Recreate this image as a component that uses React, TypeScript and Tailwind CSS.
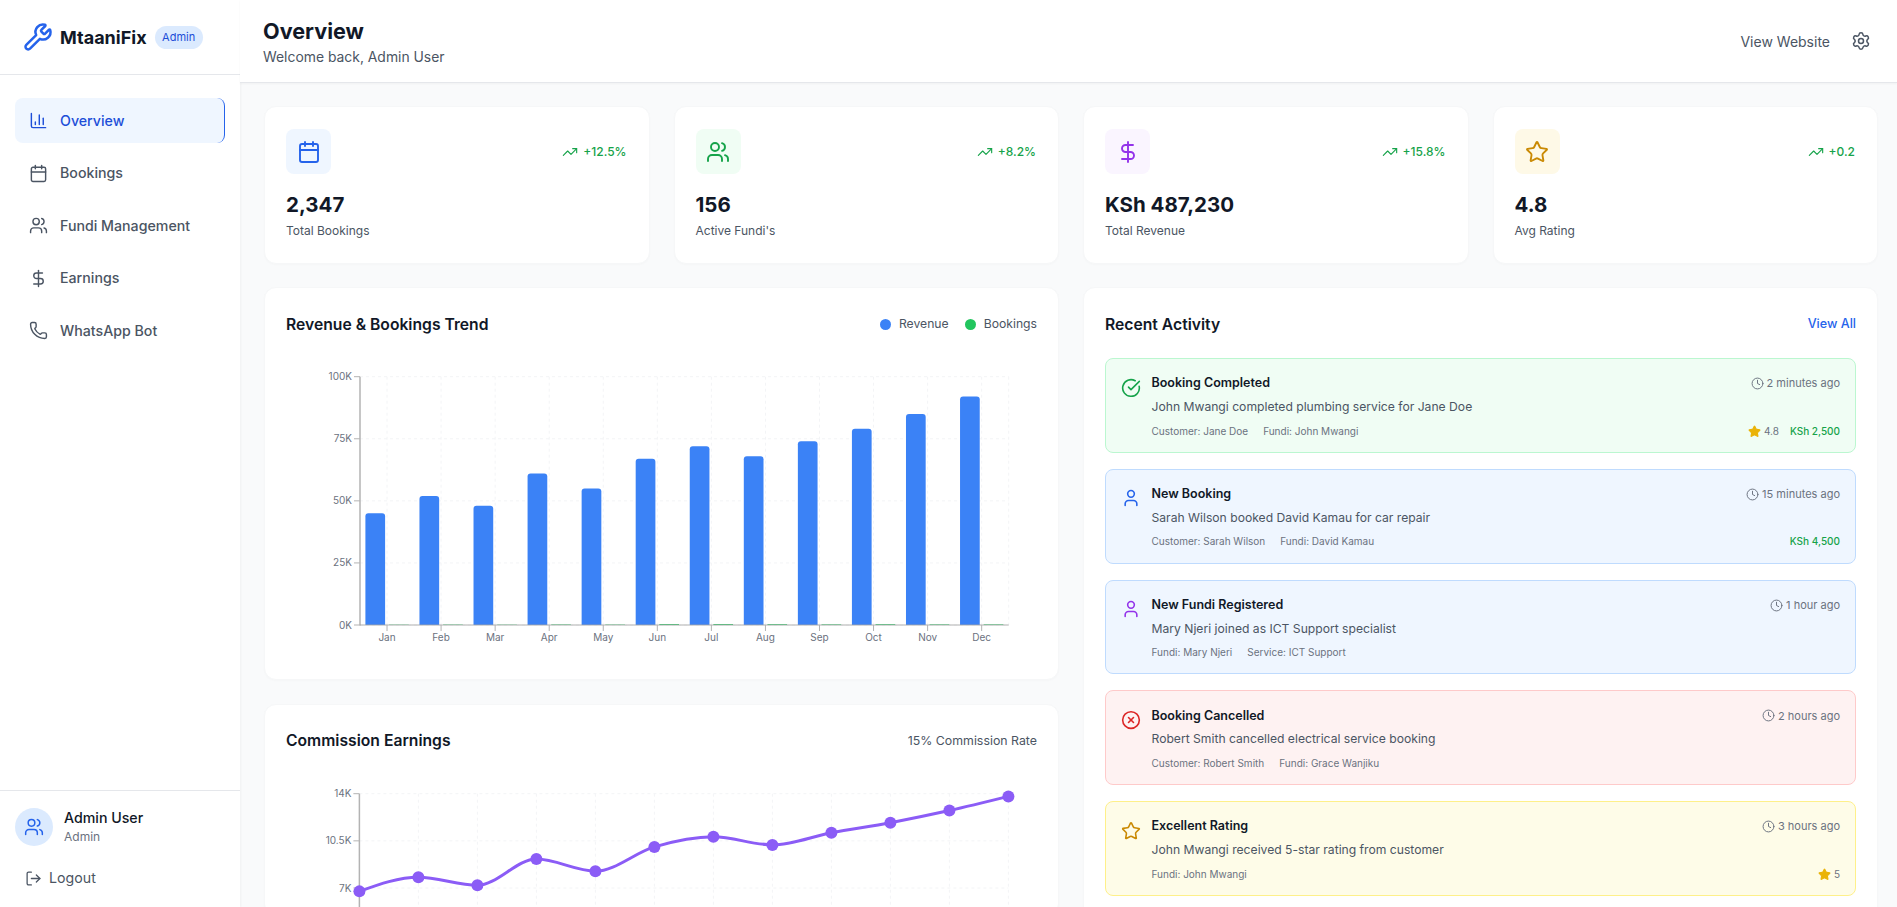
import React from "react";
import {
  Wrench, ChartColumn, Calendar, Users, DollarSign, Phone, LogOut, Settings, TrendingUp,
  Star, CircleCheckBig, User, CircleX, Clock,
} from "lucide-react";

const months = ["Jan", "Feb", "Mar", "Apr", "May", "Jun", "Jul", "Aug", "Sep", "Oct", "Nov", "Dec"];
const revenue = [45, 52, 48, 61, 55, 67, 72, 68, 74, 79, 85, 92];
const commission = [6750, 7800, 7200, 9150, 8250, 10050, 10800, 10200, 11100, 11850, 12750, 13800];
const bookingHeights = [0.3, 0.4, 0.3, 0.5, 0.4, 0.9, 0.9, 0.8, 0.6, 0.8, 0.6, 0.6];

function BarChart() {
  const L = 74, R = 722.7, T = 18.7, B = 267;
  const step = (R - L) / 12;
  const y = (v: number) => B - (v / 100) * (B - T);
  return (
    <svg className="block w-full h-[300px]" viewBox="0 0 751 300" fontSize="10" fontFamily="Inter, sans-serif">
      {[0, 25, 50, 75, 100].map((v) => (
        <line key={v} x1={L} x2={R} y1={y(v)} y2={y(v)} stroke="#f3f4f6" strokeDasharray="3 3" />
      ))}
      {months.map((m, i) => (
        <line key={m} x1={L + step * (i + 0.5)} x2={L + step * (i + 0.5)} y1={T} y2={B} stroke="#f3f4f6" strokeDasharray="3 3" />
      ))}
      <line x1={R} x2={R} y1={T} y2={B} stroke="#f3f4f6" strokeDasharray="3 3" />
      {revenue.map((v, i) => {
        const x = L + step * i + 5.4;
        const top = y(v);
        return (
          <g key={i}>
            <path d={`M${x} ${B}V${top + 3}Q${x} ${top} ${x + 3} ${top}H${x + 16.7}Q${x + 19.7} ${top} ${x + 19.7} ${top + 3}V${B}Z`} fill="#3b82f6" />
            <rect x={x + 23.6} y={B - bookingHeights[i]} width={19.7} height={bookingHeights[i]} fill="#22c55e" />
          </g>
        );
      })}
      <line x1={L} x2={L} y1={T} y2={B + 0.5} stroke="#b3b3b3" strokeWidth="1.5" />
      <line x1={L} x2={R} y1={B} y2={B} stroke="#a3a3a3" strokeWidth="1.2" opacity="0.85" />
      {[0, 25, 50, 75, 100].map((v) => (
        <g key={v}>
          <line x1={L - 6} x2={L} y1={y(v)} y2={y(v)} stroke="#b3b3b3" />
          <text x={L - 8} y={y(v) + 3.5} textAnchor="end" fill="#6b7280">{v}K</text>
        </g>
      ))}
      {months.map((m, i) => (
        <g key={m}>
          <line x1={L + step * (i + 0.5)} x2={L + step * (i + 0.5)} y1={B} y2={B + 6} stroke="#b3b3b3" />
          <text x={L + step * (i + 0.5)} y={B + 15.5} textAnchor="middle" fill="#6b7280">{m}</text>
        </g>
      ))}
    </svg>
  );
}

function monotone(pts: [number, number][]) {
  const n = pts.length;
  const dx: number[] = [], dy: number[] = [], m: number[] = [];
  for (let i = 0; i < n - 1; i++) {
    dx.push(pts[i + 1][0] - pts[i][0]);
    dy.push(pts[i + 1][1] - pts[i][1]);
    m.push(dy[i] / dx[i]);
  }
  const t: number[] = [m[0]];
  for (let i = 1; i < n - 1; i++) {
    if (m[i - 1] * m[i] <= 0) t.push(0);
    else {
      const p = (m[i - 1] * dx[i] + m[i] * dx[i - 1]) / (dx[i] + dx[i - 1]);
      t.push(Math.sign(m[i - 1]) * Math.min(Math.abs(m[i - 1]), Math.abs(m[i]), 0.5 * Math.abs(p)) * 2);
    }
  }
  t.push(m[n - 2]);
  t[0] = (3 * m[0] - t[1]) / 2;
  t[n - 1] = (3 * m[n - 2] - t[n - 2]) / 2;
  let d = `M${pts[0][0]} ${pts[0][1]}`;
  for (let i = 0; i < n - 1; i++) {
    const h = dx[i] / 3;
    d += `C${pts[i][0] + h} ${pts[i][1] + h * t[i]} ${pts[i + 1][0] - h} ${pts[i + 1][1] - h * t[i + 1]} ${pts[i + 1][0]} ${pts[i + 1][1]}`;
  }
  return d;
}

function LineChart() {
  const L = 73.4, R = 722.4, T = 18.7, B = 207.3;
  const step = (R - L) / 11;
  const y = (v: number) => B - (v / 14000) * (B - T);
  const pts = commission.map((v, i) => [L + step * i, y(v)] as [number, number]);
  const lines = [0, 3500, 7000, 10500, 14000];
  const labelled = [
    [7000, "7K"], [10500, "10.5K"], [14000, "14K"],
  ] as [number, string][];
  return (
    <svg className="block w-full h-[140px]" viewBox="0 0 751 140" fontSize="10" fontFamily="Inter, sans-serif">
      {lines.map((v) => (
        <line key={v} x1={L} x2={R} y1={y(v)} y2={y(v)} stroke="#f3f4f6" strokeDasharray="3 3" />
      ))}
      {months.map((m, i) => (
        <line key={m} x1={L + step * i} x2={L + step * i} y1={T} y2={B} stroke="#f3f4f6" strokeDasharray="3 3" />
      ))}
      <line x1={L} x2={L} y1={T} y2={B} stroke="#b3b3b3" strokeWidth="1.5" />
      {labelled.map(([v, label]) => (
        <g key={v}>
          <line x1={L - 6} x2={L} y1={y(v)} y2={y(v)} stroke="#b3b3b3" />
          <text x={L - 8} y={y(v) + 3.5} textAnchor="end" fill="#6b7280">{label}</text>
        </g>
      ))}
      <path d={monotone(pts)} fill="none" stroke="#8b5cf6" strokeWidth="3" />
      {pts.map(([cx, cy], i) => (
        <circle key={i} cx={cx} cy={cy} r="6" fill="#8b5cf6" />
      ))}
    </svg>
  );
}

const nav = [
  { label: "Overview", Icon: ChartColumn, active: true },
  { label: "Bookings", Icon: Calendar },
  { label: "Fundi Management", Icon: Users },
  { label: "Earnings", Icon: DollarSign },
  { label: "WhatsApp Bot", Icon: Phone },
];

const stats = [
  { Icon: Calendar, bg: "bg-[#eff6ff]", fg: "text-[#2563eb]", change: "+12.5%", value: "2,347", label: "Total Bookings" },
  { Icon: Users, bg: "bg-[#f0fdf4]", fg: "text-[#16a34a]", change: "+8.2%", value: "156", label: "Active Fundi's" },
  { Icon: DollarSign, bg: "bg-[#faf5ff]", fg: "text-[#9333ea]", change: "+15.8%", value: "KSh 487,230", label: "Total Revenue" },
  { Icon: Star, bg: "bg-[#fef9e7]", fg: "text-[#ca8a04]", change: "+0.2", value: "4.8", label: "Avg Rating" },
];

const activity = [
  {
    Icon: CircleCheckBig, iconClass: "text-[#16a34a]", box: "bg-[#f0fdf4] border-[#bbf7d0]",
    title: "Booking Completed", time: "2 minutes ago",
    desc: "John Mwangi completed plumbing service for Jane Doe",
    meta: ["Customer: Jane Doe", "Fundi: John Mwangi"], rating: "4.8", amount: "KSh 2,500",
  },
  {
    Icon: User, iconClass: "text-[#2563eb]", box: "bg-[#eff6ff] border-[#bfdbfe]",
    title: "New Booking", time: "15 minutes ago",
    desc: "Sarah Wilson booked David Kamau for car repair",
    meta: ["Customer: Sarah Wilson", "Fundi: David Kamau"], amount: "KSh 4,500",
  },
  {
    Icon: User, iconClass: "text-[#9333ea]", box: "bg-[#eff6ff] border-[#bfdbfe]",
    title: "New Fundi Registered", time: "1 hour ago",
    desc: "Mary Njeri joined as ICT Support specialist",
    meta: ["Fundi: Mary Njeri", "Service: ICT Support"],
  },
  {
    Icon: CircleX, iconClass: "text-[#dc2626]", box: "bg-[#fef2f2] border-[#fecaca]",
    title: "Booking Cancelled", time: "2 hours ago",
    desc: "Robert Smith cancelled electrical service booking",
    meta: ["Customer: Robert Smith", "Fundi: Grace Wanjiku"],
  },
  {
    Icon: Star, iconClass: "text-[#ca8a04]", box: "bg-[#fefce8] border-[#fef08a]",
    title: "Excellent Rating", time: "3 hours ago",
    desc: "John Mwangi received 5-star rating from customer",
    meta: ["Fundi: John Mwangi"], rating: "5",
  },
];

export default function App() {
  return (
    <div className="flex h-screen overflow-hidden bg-[#f9fafb] font-[Inter,sans-serif] text-[#111827]">
      <aside className="flex w-[240px] shrink-0 flex-col bg-white shadow-[1px_0_2px_rgba(0,0,0,0.04)]">
        <div className="flex h-[75px] items-center border-b border-[#e5e7eb] pl-[23px]">
          <Wrench size={30} className="text-[#2563eb]" strokeWidth={2} />
          <span className="ml-[7px] text-[18px] font-bold">MtaaniFix</span>
          <span className="ml-[8px] rounded-full bg-[#dbeafe] px-[7.5px] py-[4px] text-[11px] leading-[15px] text-[#1d4ed8]">Admin</span>
        </div>
        <nav className="flex flex-1 flex-col gap-[7.5px] px-[15px] pt-[23px]">
          {nav.map(({ label, Icon, active }) => (
            <div
              key={label}
              className={
                active
                  ? "flex h-[45px] items-center gap-[12px] rounded-[8px] border-r-[1.5px] border-[#2563eb] bg-[#eff6ff] pl-[14px] text-[14.2px] font-medium text-[#1d4ed8]"
                  : "flex h-[45px] items-center gap-[12px] rounded-[8px] pl-[14px] text-[14.2px] font-medium text-[#4b5563]"
              }
            >
              <Icon size={19} strokeWidth={1.8} />
              <span>{label}</span>
            </div>
          ))}
        </nav>
        <div className="border-t border-[#e5e7eb] px-[15px] pt-[17px] pb-[19px]">
          <div className="flex items-center gap-[11px]">
            <div className="flex size-[38px] items-center justify-center rounded-full bg-[#dbeafe]">
              <Users size={20} className="text-[#2563eb]" strokeWidth={1.8} />
            </div>
            <div>
              <div className="text-[14.2px] leading-[20px] font-medium">Admin User</div>
              <div className="text-[12px] leading-[18px] text-[#6b7280]">Admin</div>
            </div>
          </div>
          <div className="mt-[22px] flex items-center gap-[7px] pl-[10px] text-[14.2px] leading-[20px] text-[#4b5563]">
            <LogOut size={17} strokeWidth={1.8} />
            <span>Logout</span>
          </div>
        </div>
      </aside>

      <div className="flex min-w-0 flex-1 flex-col">
        <header className="flex h-[83px] shrink-0 items-center justify-between border-b border-[#e5e7eb] bg-white pr-[26px] pl-[23px] shadow-[0_1px_2px_rgba(0,0,0,0.04)]">
          <div>
            <h1 className="text-[21.6px] leading-[32px] font-bold">Overview</h1>
            <p className="text-[13.9px] leading-[20px] text-[#4b5563]">Welcome back, Admin User</p>
          </div>
          <div className="flex items-center gap-[21px] text-[14px] text-[#4b5563]">
            <span>View Website</span>
            <Settings size={20} strokeWidth={1.8} />
          </div>
        </header>

        <main className="min-h-0 flex-1 overflow-hidden pt-[23px] pr-[19px] pl-[24px]">
          <div className="grid grid-cols-4 gap-[24px]">
            {stats.map(({ Icon, bg, fg, change, value, label }) => (
              <div key={label} className="h-[158px] rounded-[12px] border border-[#f6f7f8] bg-white pt-[22px] pr-[22px] pl-[21px] shadow-[0_1px_2px_rgba(0,0,0,0.02)]">
                <div className="flex items-center justify-between">
                  <div className={`flex size-[45px] items-center justify-center rounded-[8px] ${bg} ${fg}`}>
                    <Icon size={24} strokeWidth={1.9} />
                  </div>
                  <div className="flex items-center gap-[5px] text-[12px] font-medium text-[#16a34a]">
                    <TrendingUp size={16} strokeWidth={1.7} />
                    <span>{change}</span>
                  </div>
                </div>
                <div className="mt-[17px] text-[20.5px] leading-[28px] font-bold">{value}</div>
                <div className="mt-[4px] text-[12px] leading-[16px] text-[#4b5563]">{label}</div>
              </div>
            ))}
          </div>

          <div className="mt-[23px] grid grid-cols-2 gap-[24px]">
            <div className="flex flex-col gap-[24px]">
              <section className="h-[393px] rounded-[12px] border border-[#f6f7f8] bg-white px-[21px] pt-[21px] shadow-[0_1px_2px_rgba(0,0,0,0.02)]">
                <div className="mb-[18px] flex h-[31px] items-center justify-between">
                  <h2 className="text-[15.7px] font-semibold">Revenue &amp; Bookings Trend</h2>
                  <div className="flex items-center gap-[16px] text-[12.2px] text-[#4b5563]">
                    <span className="flex items-center gap-[8px]"><i className="size-[11px] rounded-full bg-[#3b82f6]" />Revenue</span>
                    <span className="flex items-center gap-[8px]"><i className="size-[11px] rounded-full bg-[#22c55e]" />Bookings</span>
                  </div>
                </div>
                <BarChart />
              </section>
              <section className="rounded-[12px] border border-[#f6f7f8] bg-white px-[21px] pt-[21px] shadow-[0_1px_2px_rgba(0,0,0,0.02)]">
                <div className="mb-[19px] flex h-[30px] items-center justify-between">
                  <h2 className="text-[15.7px] font-semibold">Commission Earnings</h2>
                  <span className="text-[12.35px] text-[#4b5563]">15% Commission Rate</span>
                </div>
                <LineChart />
              </section>
            </div>

            <section className="self-start rounded-[12px] border border-[#f6f7f8] bg-white px-[21px] pt-[21px] pb-[21px] shadow-[0_1px_2px_rgba(0,0,0,0.02)]">
              <div className="mb-[18px] flex h-[31px] items-center justify-between">
                <h2 className="text-[15.7px] font-semibold">Recent Activity</h2>
                <span className="text-[12.6px] font-medium text-[#2563eb]">View All</span>
              </div>
              <div className="flex flex-col gap-[16px]">
                {activity.map((a) => (
                  <div key={a.title} className={`flex h-[94.8px] gap-[10.5px] rounded-[8px] border pt-[15px] pr-[15px] pl-[15px] ${a.box}`}>
                    <a.Icon size={20} strokeWidth={1.9} className={`mt-[3.5px] shrink-0 ${a.iconClass}`} />
                    <div className="min-w-0 flex-1">
                      <div className="flex h-[19px] items-center justify-between">
                        <span className="text-[12.5px] font-semibold">{a.title}</span>
                        <span className="flex items-center gap-[3px] text-[11px] text-[#6b7280]">
                          <Clock size={13} strokeWidth={1.8} />
                          {a.time}
                        </span>
                      </div>
                      <p className="mt-[4px] text-[12.15px] leading-[20px] text-[#4b5563]">{a.desc}</p>
                      <div className="mt-[6px] flex h-[16px] items-center justify-between text-[10px] text-[#6b7280]">
                        <div className="flex gap-[15px]">
                          {a.meta.map((m) => <span key={m}>{m}</span>)}
                        </div>
                        <div className="flex items-center gap-[11px]">
                          {a.rating && (
                            <span className="flex items-center gap-[3px]">
                              <Star size={13} className="fill-[#eab308] text-[#eab308]" />
                              {a.rating}
                            </span>
                          )}
                          {a.amount && <span className="font-medium text-[#16a34a]">{a.amount}</span>}
                        </div>
                      </div>
                    </div>
                  </div>
                ))}
              </div>
            </section>
          </div>
        </main>
      </div>
    </div>
  );
}
